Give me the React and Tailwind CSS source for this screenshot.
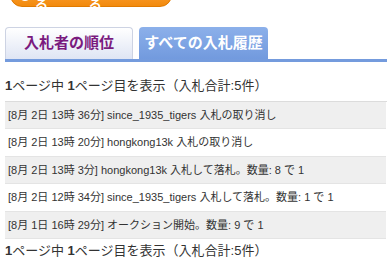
import React from 'react';

const BIDS = [
  { time: '[8月 2日 13時 36分]', text: 'since_1935_tigers 入札の取り消し' },
  { time: '[8月 2日 13時 20分]', text: 'hongkong13k 入札の取り消し' },
  { time: '[8月 2日 13時 3分]', text: 'hongkong13k 入札して落札。数量: 8 で 1' },
  { time: '[8月 2日 12時 34分]', text: 'since_1935_tigers 入札して落札。数量: 1 で 1' },
  { time: '[8月 1日 16時 29分]', text: 'オークション開始。数量: 9 で 1' },
];

const font = { fontFamily: '"Liberation Sans", "Noto Sans CJK JP", sans-serif' };

const PageInfo = () => (
  <p className="text-[13px] leading-4 text-[#333]">
    <b>1</b>ページ中 <b>1</b>ページ目を表示（入札合計:5件）
  </p>
);

const App = () => {
  return (
    <div className="w-[387px] h-[278px] bg-white overflow-hidden" style={font}>
      {/* cut-off action button */}
      <div className="ml-[10px] -mt-[17px] w-[162px] h-[24px] rounded-full bg-gradient-to-b from-[#ffa733] to-[#f28a0c] border border-[#e07a00] flex items-center gap-1 px-2 text-white text-[13px] font-bold">
        <span className="w-3 h-3 rounded-full bg-white shrink-0" />
        <span>入札する</span>
        <span className="ml-auto">ページへ戻る</span>
      </div>

      {/* TABS */}
      <div className="mt-[20px] pl-[5px]">
        <div className="flex gap-[6px] items-end">
          <div className="w-[128px] h-[32px] rounded-t-[4px] border border-b-0 border-[#cdd3e3] bg-gradient-to-b from-white to-[#dfe5f4] flex items-center justify-center text-[15px] font-bold text-[#7a1a7e]">
            入札者の順位
          </div>
          <div className="w-[129px] h-[32px] rounded-t-[4px] bg-gradient-to-b from-[#8cb0ea] to-[#729ade] flex items-center justify-center text-[15px] font-bold text-white">
            すべての入札履歴
          </div>
        </div>
        <div className="h-[3px] bg-[#749bdd]" />

        <div className="pt-[16px] pb-[7px]">
          <PageInfo />
        </div>

        <div className="border-t border-[#dcdcdc] pr-[1px]">
          {BIDS.map((b, i) => (
            <div
              key={i}
              className={`h-[27.4px] flex items-center px-[3px] text-[11px] text-[#333] border-b border-[#e4e4e4] ${i % 2 === 0 ? 'bg-[#efefef]' : 'bg-white'}`}
            >
              <span className="whitespace-pre">{b.time} {b.text}</span>
            </div>
          ))}
        </div>

        <div className="pt-[4px]">
          <PageInfo />
        </div>
      </div>
    </div>
  );
};

export default App;
